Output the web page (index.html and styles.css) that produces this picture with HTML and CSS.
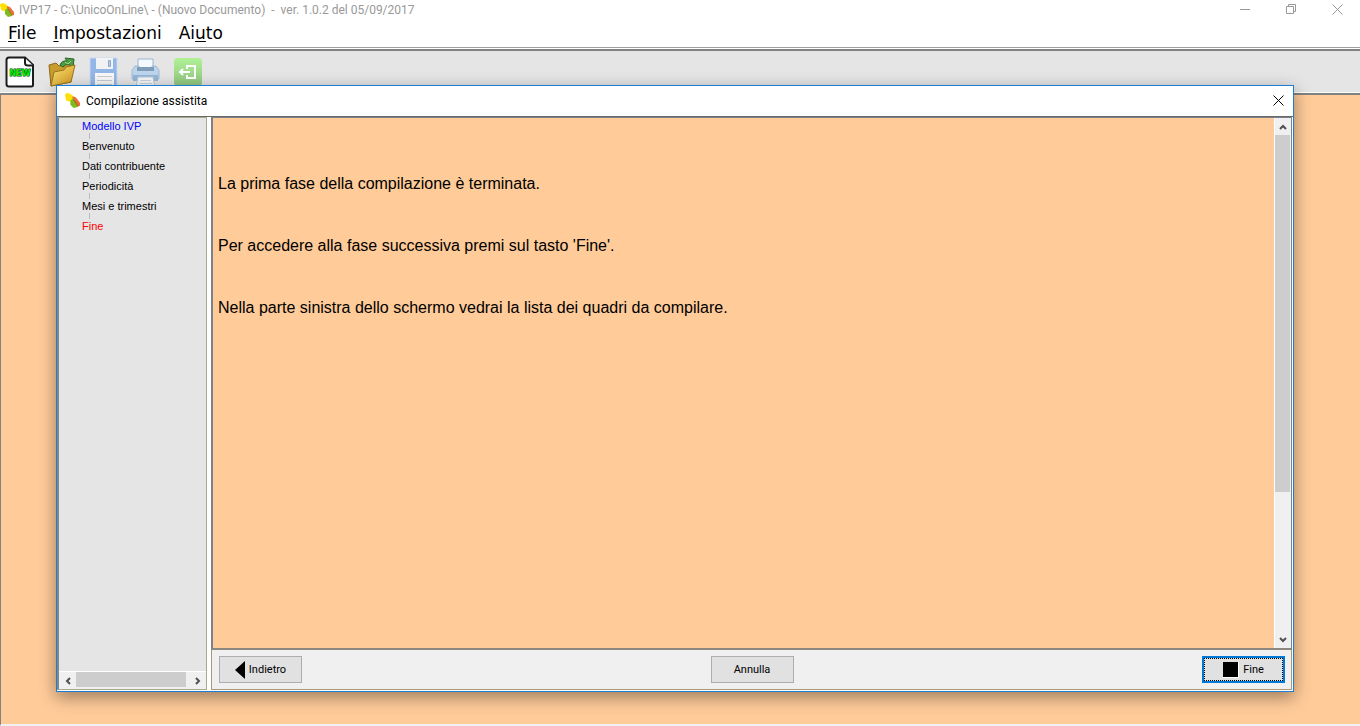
FILE: index.html
```html
<!DOCTYPE html>
<html lang="it">
<head>
  <meta charset="UTF-8" />
  <meta name="viewport" content="width=device-width, initial-scale=1" />
  <title>IVP17</title>
  <link rel="stylesheet" href="styles.css">
</head>
<body>

<svg class="defs" width="0" height="0" aria-hidden="true">
  <symbol id="leaf" viewBox="0 0 14 14">
    <path d="M0 1L3 0L7 2L8 7L4 8L1 7Z" fill="#ffe000" />
    <path d="M7 3L10 4L14 9V12L11 13L7 7Z" fill="#f36b3b" />
    <path d="M5 7L8 5L11 9L12 13L8 14L5 11Z" fill="#7dbb1e" />
    <path d="M8 6L12 12" stroke="#a06a20" fill="none" />
  </symbol>
  <symbol id="cross" viewBox="0 0 11 11">
    <path d="M.5 .5L10.500 10.500M10.500 .5L.5 10.500" stroke="currentColor" fill="none" />
  </symbol>
  <symbol id="chevron" viewBox="0 0 8 6">
    <path d="M1 5L4 2L7 5" stroke="#505050" stroke-width="2" fill="none" />
  </symbol>
  <linearGradient id="folder" x1="0" y1="0" x2="1" y2="1">
    <stop offset="0" stop-color="#fbe27a" />
    <stop offset="1" stop-color="#cf9419" />
  </linearGradient>
  <linearGradient id="exit" x1="0" y1="0" x2="0" y2="1">
    <stop offset="0" stop-color="#b0f195" />
    <stop offset="1" stop-color="#8fc57f" />
  </linearGradient>
</svg>

<div class="app">
  <header class="titlebar">
    <svg class="app-icon" width="14" height="14"><use href="#leaf" /></svg>
    <span class="app-title">IVP17 - C:\UnicoOnLine\ - (Nuovo Documento)&nbsp; -&nbsp; ver. 1.0.2 del 05/09/2017</span>
    <div class="window-buttons">
      <button type="button" aria-label="Riduci a icona">
        <svg width="11" height="11"><path d="M0 5.500H10" stroke="currentColor" /></svg>
      </button>
      <button type="button" aria-label="Ripristina">
        <svg width="11" height="11"><path d="M.5 2.500H7.500V9.500H.5ZM2.500 2.500V.5H9.500V7.500H7.500" stroke="currentColor" fill="none" /></svg>
      </button>
      <button type="button" aria-label="Chiudi">
        <svg width="11" height="11"><use href="#cross" /></svg>
      </button>
    </div>
  </header>

  <nav class="menubar">
    <button type="button"><u>F</u>ile</button>
    <button type="button"><u>I</u>mpostazioni</button>
    <button type="button">Ai<u>u</u>to</button>
  </nav>

  <div class="toolbar">
    <button type="button" aria-label="Nuovo">
      <svg width="30" height="32" viewBox="0 0 30 32">
        <path d="M4 1.500H20L28 9V29Q28 30.500 26 30.500H4Q1.500 30.500 1.500 28V4Q1.500 1.500 4 1.500Z" fill="#fff" stroke="#1c1c1c" stroke-width="2" />
        <path d="M20 2V7Q20 9.500 23 9.500H28" fill="#fff" stroke="#1c1c1c" stroke-width="2" />
        <text x="15" y="20" text-anchor="middle" class="new-label">NEW</text>
      </svg>
    </button>
    <button type="button" aria-label="Apri">
      <svg width="30" height="32" viewBox="0 0 30 32">
        <path d="M2 9L9 7L12 10L24 7V26L4 30Z" fill="#c99a2c" stroke="#8a6a1c" />
        <path d="M13 9Q15 4 20 5L18 2L27 3L26 12L23 9Q19 7 16 11Z" fill="#4e9b42" stroke="#28662a" />
        <path d="M18 6L21 8L24 5" fill="none" stroke="#a5d79a" />
        <path d="M4 30L7 16L17 14L19 11L28 9L24 26Z" fill="url(#folder)" stroke="#9a741d" />
      </svg>
    </button>
    <button type="button" aria-label="Salva" disabled>
      <svg width="30" height="32" viewBox="0 0 30 32">
        <path d="M1 2H28V31H3L1 29Z" fill="#94b6e6" stroke="#c7daf3" />
        <path d="M7 2H24V13H7Z" fill="#f1f2f4" />
        <path d="M19.500 4.500H21.500V10.500H19.500Z" fill="#b9cce8" stroke="#8fa6c6" />
        <path d="M6 17H25V31H6Z" fill="#f8f8f8" />
        <path d="M8 20.500H23M8 24.500H23M8 28.500H23" stroke="#c9cdd2" />
      </svg>
    </button>
    <button type="button" aria-label="Stampa" disabled>
      <svg width="30" height="32" viewBox="0 0 30 32">
        <path d="M7 3H22V13H7Z" fill="#f4f9ff" stroke="#9cb6d2" />
        <path d="M4 10H8V13H21V10H25L28 14V23H1V14Z" fill="#bcd5ec" stroke="#9fb9d2" />
        <path d="M6 11H23V15H6Z" fill="#7f9cb8" />
        <path d="M2 19H27V25H2Z" fill="#94b6d8" />
        <path d="M7 21H22L24 31H5Z" fill="#f5f7f9" stroke="#b8c7d5" />
        <path d="M9 24.500H20M9 27.500H21" stroke="#cdd5dd" />
      </svg>
    </button>
    <button type="button" aria-label="Esci" disabled>
      <svg width="30" height="32" viewBox="0 0 30 32">
        <rect x="1" y="2" width="28" height="28" rx="4" fill="url(#exit)" />
        <path d="M14 13V10H22V22H14V19" fill="none" stroke="#fff" stroke-width="2" />
        <path d="M17 16H7M10 13L7 16L10 19" fill="none" stroke="#fff" stroke-width="2" />
      </svg>
    </button>
  </div>

  <main class="desktop"></main>

  <section class="dialog" role="dialog" aria-labelledby="dialog-title">
    <header class="dialog-header">
      <svg width="15" height="15"><use href="#leaf" /></svg>
      <h1 id="dialog-title">Compilazione assistita</h1>
      <button type="button" aria-label="Chiudi finestra">
        <svg width="11" height="11"><use href="#cross" /></svg>
      </button>
    </header>

    <div class="dialog-body">
      <aside class="sidebar">
        <ul class="steps">
          <li><a class="root" href="#modello">Modello IVP</a></li>
          <li><a href="#benvenuto">Benvenuto</a></li>
          <li><a href="#dati">Dati contribuente</a></li>
          <li><a href="#periodicita">Periodicità</a></li>
          <li><a href="#mesi">Mesi e trimestri</a></li>
          <li><a class="current" href="#fine">Fine</a></li>
        </ul>
        <div class="scroll-x">
          <button type="button" aria-label="Scorri a sinistra"><svg class="left" width="8" height="6"><use href="#chevron" /></svg></button>
          <div class="track"><div class="thumb"></div></div>
          <button type="button" aria-label="Scorri a destra"><svg class="right" width="8" height="6"><use href="#chevron" /></svg></button>
        </div>
      </aside>

      <div class="content">
        <div class="page">
          <div class="text">
            <p>La prima fase della compilazione è terminata.</p>
            <p>Per accedere alla fase successiva premi sul tasto 'Fine'.</p>
            <p>Nella parte sinistra dello schermo vedrai la lista dei quadri da compilare.</p>
          </div>
          <div class="scroll-y">
            <button type="button" aria-label="Scorri in alto"><svg width="8" height="6"><use href="#chevron" /></svg></button>
            <div class="track"><div class="thumb"></div></div>
            <button type="button" aria-label="Scorri in basso"><svg class="down" width="8" height="6"><use href="#chevron" /></svg></button>
          </div>
        </div>
        <footer class="actions">
          <button type="button" class="btn">
            <svg width="10" height="18"><path d="M10 0V18L0 9Z" fill="#000" /></svg>
            Indietro
          </button>
          <button type="button" class="btn">Annulla</button>
          <button type="button" class="btn btn-default">
            <svg width="16" height="16"><path d="M0 0H16V16H0Z" fill="#fff" /><path d="M0 0H15V15H0Z" fill="#000" /></svg>
            Fine
          </button>
        </footer>
      </div>
    </div>
  </section>
</div>

</body>
</html>
```
FILE: styles.css
```css
* {
  box-sizing: border-box;
}
body {
  margin: 0;
  font-family: Roboto, "Noto Sans", sans-serif;
  font-size: 12px;
  color: #000;
}
button {
  font: inherit;
  color: inherit;
  background: none;
  border: none;
  padding: 0;
}
svg {
  display: block;
  flex: none;
}
.defs {
  position: absolute;
}
.app {
  position: relative;
  display: flex;
  flex-direction: column;
  min-height: 100vh;
  background: #fff;
}

/* main window */
.titlebar {
  display: flex;
  align-items: center;
  height: 19px;
  color: #999;
  gap: 5px;
}
.app-title {
  white-space: nowrap;
}
.window-buttons {
  display: flex;
  margin-left: auto;
  height: 17px;
}
.window-buttons button {
  display: grid;
  place-items: center;
  width: 46px;
}
.menubar {
  display: flex;
  gap: 17px;
  height: 29px;
  padding: 0 8px;
  border-bottom: 1px solid #a0a0a0;
  font-family: "DejaVu Sans", sans-serif;
  font-size: 17px;
  line-height: 28px;
}
.menubar u {
  text-underline-offset: 2px;
}
.toolbar {
  display: flex;
  align-items: flex-start;
  gap: 12px;
  height: 44px;
  margin-top: 1px;
  padding: 5px 5px 0;
  background: #e5e5e5;
  border-top: 2px solid #828282;
}
.new-label {
  font: 900 8px "DejaVu Sans", sans-serif;
  fill: #00f000;
  stroke: #003c00;
  stroke-width: 1px;
  paint-order: stroke;
}
.desktop {
  flex: 1;
  background: #ffcb99;
  border-top: 2px solid #828282;
  border-left: 1px solid #828282;
  border-bottom: 2px solid #f0f0f0;
  box-shadow: 0 -1px #fff;
}

/* assisted filling dialog */
.dialog {
  position: absolute;
  top: 85px;
  right: 66px;
  bottom: 34px;
  left: 56px;
  display: flex;
  flex-direction: column;
  background: #fff;
  border: 1px solid #1a7fd4;
  box-shadow: 0 5px 16px rgba(0, 0, 0, 0.4);
}
.dialog-header {
  display: flex;
  align-items: center;
  gap: 6px;
  height: 30px;
  padding: 0 9px 1px 8px;
}
.dialog-header h1 {
  margin: 0;
  flex: 1;
  font-size: 12px;
  font-weight: normal;
}
.dialog-body {
  flex: 1;
  display: flex;
  gap: 4px;
  min-height: 0;
  padding: 0 1px 1px 0;
  border-top: 1px solid #696969;
}
.sidebar {
  display: flex;
  flex-direction: column;
  width: 150px;
  background: #e5e5e5;
  border: 1px solid #a9a98c;
  border-left: 2px solid #868686;
}
.steps {
  flex: 1;
  margin: 0;
  padding: 0 0 0 23px;
  list-style: none;
  font: 11px/16px "Liberation Sans", Arial, sans-serif;
}
.steps li + li::before {
  content: "";
  display: block;
  height: 6px;
  margin: -1px 0 -1px 7px;
  border-left: 1px solid #bbb;
}
.steps a {
  display: block;
  color: #000;
  text-decoration: none;
}
.steps .root {
  color: #00f;
}
.steps .current {
  color: #f00;
}
.scroll-x,
.scroll-y {
  display: flex;
  background: #f0f0f0;
}
.scroll-x {
  height: 18px;
  border-top: 1px solid #fff;
}
.scroll-y {
  flex-direction: column;
  width: 17px;
  border-left: 1px solid #fff;
}
.scroll-x button,
.scroll-y button {
  display: grid;
  place-items: center;
  flex: 0 0 17px;
}
.track {
  flex: 1;
}
.thumb {
  background: #cdcdcd;
}
.scroll-x .thumb {
  width: 97%;
  height: 15px;
}
.scroll-y .thumb {
  width: 15px;
  height: 72%;
}
.left {
  transform: rotate(-90deg);
}
.right {
  transform: rotate(90deg);
}
.down {
  transform: rotate(180deg);
}
.content {
  flex: 1;
  display: flex;
  flex-direction: column;
  background: #f0f0f0;
}
.page {
  flex: 1;
  display: flex;
  background: #ffcb99;
  border: 1px solid #7c8088;
  border-left: 2px solid #7c8088;
  border-bottom: 2px solid #8c8880;
}
.text {
  flex: 1;
  padding: 57px 5px 0;
  font: 16px/18px "Liberation Sans", Arial, sans-serif;
}
.text p {
  margin: 0 0 44px;
}
.actions {
  display: flex;
  justify-content: space-between;
  padding: 6px 6px 6px 7px;
  border: 1px solid #a89878;
  border-top: none;
  font-size: 11px;
}
.btn {
  display: flex;
  align-items: center;
  justify-content: center;
  gap: 4px;
  width: 83px;
  height: 27px;
  background: #e1e1e1;
  border: 1px solid #adadad;
}
.btn-default {
  border: 2px solid #0078d7;
  outline: 1px dotted #000;
  outline-offset: -3px;
}
```
